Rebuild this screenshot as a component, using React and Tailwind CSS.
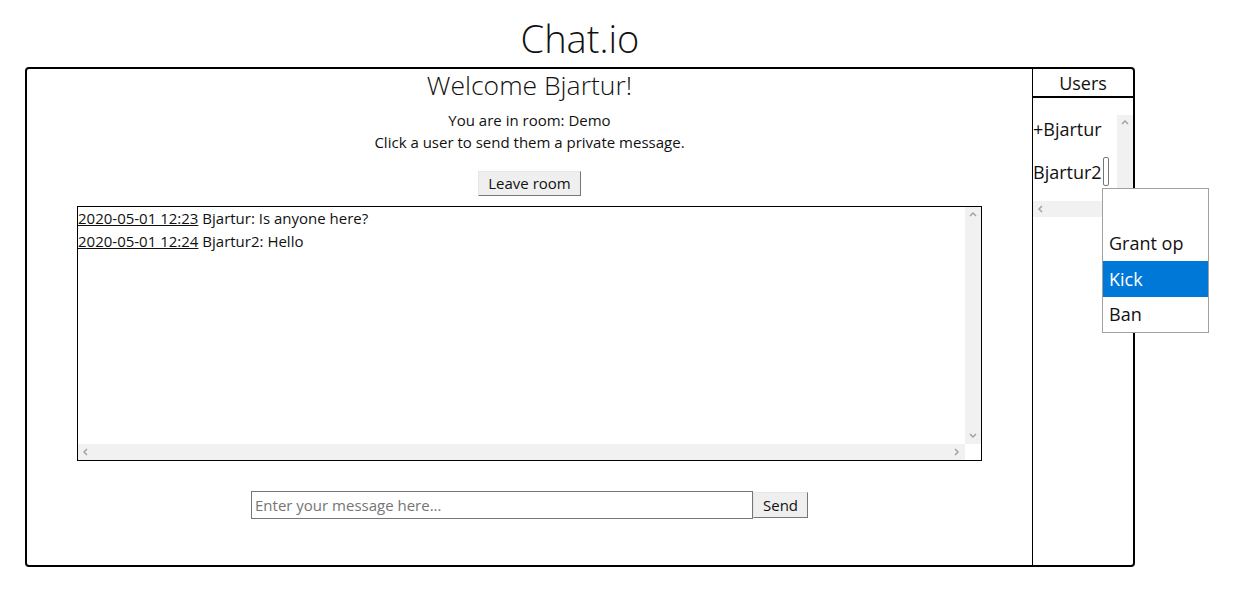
import React from 'react';

function Chevron({ dir, className }) {
  const paths = {
    up: 'M1 5 L4 2 L7 5',
    down: 'M1 2 L4 5 L7 2',
    left: 'M5 1 L2 4 L5 7',
    right: 'M2 1 L5 4 L2 7',
  };
  return (
    <svg width="8" height="8" viewBox="0 0 8 8" className={className}>
      <path d={paths[dir]} fill="none" stroke="#a3a3a3" strokeWidth="1.5" />
    </svg>
  );
}

function VScroll({ showDown = true }) {
  return (
    <div className="w-[16px] bg-[#f1f1f1] flex flex-col items-center justify-between py-[4px]">
      <Chevron dir="up" />
      {showDown && <Chevron dir="down" />}
    </div>
  );
}

function HScroll({ showRight = true }) {
  return (
    <div className="flex-1 h-[16px] bg-[#f1f1f1] flex items-center justify-between px-[4px]">
      <Chevron dir="left" />
      {showRight && <Chevron dir="right" />}
    </div>
  );
}

const messages = [
  { time: '2020-05-01 12:23', user: 'Bjartur', text: 'Is anyone here?' },
  { time: '2020-05-01 12:24', user: 'Bjartur2', text: 'Hello' },
];

export default function App() {
  return (
    <div className="font-['Open_Sans',sans-serif] text-[#111] bg-white h-[598px]">
      <h1 className="ml-[25px] w-[1110px] h-[67px] text-center text-[38px] font-light leading-[76px]">Chat.io</h1>

      <div className="ml-[25px] w-[1110px] h-[500px] border-2 border-black rounded-[4px] flex">
        <main className="flex-1 flex flex-col items-center">
          <h2 className="text-[26.5px] font-light leading-[33px]">Welcome Bjartur!</h2>
          <p className="mt-[7px] text-[15px] leading-[22px] text-center">
            You are in room: Demo
            <br />
            Click a user to send them a private message.
          </p>
          <button className="mt-[18px] h-[25px] px-[9px] text-[15px] leading-[21px] bg-[#efefef] border border-[#767676] border-t-[#e6e6e6] border-l-[#e6e6e6]">
            Leave room
          </button>

          <div className="mt-[10px] w-[905px] h-[255px] border border-black flex flex-col">
            <div className="flex flex-1">
              <div className="flex-1 text-[15px] leading-[23px]">
                {messages.map((m) => (
                  <div key={m.time}>
                    <span className="underline">{m.time}</span> {m.user}: {m.text}
                  </div>
                ))}
              </div>
              <VScroll />
            </div>
            <div className="flex">
              <HScroll />
              <div className="w-[16px] h-[16px]" />
            </div>
          </div>

          <div className="mt-[30px] flex items-center">
            <input
              type="text"
              placeholder="Enter your message here..."
              className="w-[502px] h-[28px] border border-[#767676] px-[3px] text-[15px] placeholder:text-[#757575] outline-none"
            />
            <button className="w-[55px] h-[26px] text-[15px] leading-[21px] bg-[#efefef] border border-[#767676] border-t-[#e6e6e6] border-l-[#e6e6e6]">
              Send
            </button>
          </div>
        </main>

        <aside className="w-[101px] border-l border-black flex flex-col">
          <div className="h-[29px] border-b-2 border-black text-center text-[18px] leading-[28px]">Users</div>
          <div className="relative mt-[17px] h-[102px] flex flex-col">
            <div className="flex h-[86px]">
              <div className="flex-1 overflow-hidden text-[18px] leading-[26px] whitespace-nowrap">
                <div className="mt-[1px]">+Bjartur</div>
                <div className="mt-[15px] flex items-center">
                  <span>Bjartur2</span>
                  <span className="ml-[1px] w-[6px] h-[29px] border border-[#767676] rounded-[2px] bg-white" />
                </div>
              </div>
              <VScroll showDown={false} />
            </div>
            <div className="flex">
              <HScroll showRight={false} />
              <div className="w-[16px] h-[16px]" />
            </div>

            <div className="absolute left-[69px] top-[73px] w-[107px] h-[145px] bg-white border border-[#a0a0a0] text-[18px] z-10">
              <div className="h-[36px]" />
              <div className="h-[36px] leading-[36px] px-[6px]">Grant op</div>
              <div className="h-[36px] leading-[36px] px-[6px] bg-[#0078d7] text-white">Kick</div>
              <div className="h-[35px] leading-[35px] px-[6px]">Ban</div>
            </div>
          </div>
        </aside>
      </div>
    </div>
  );
}
